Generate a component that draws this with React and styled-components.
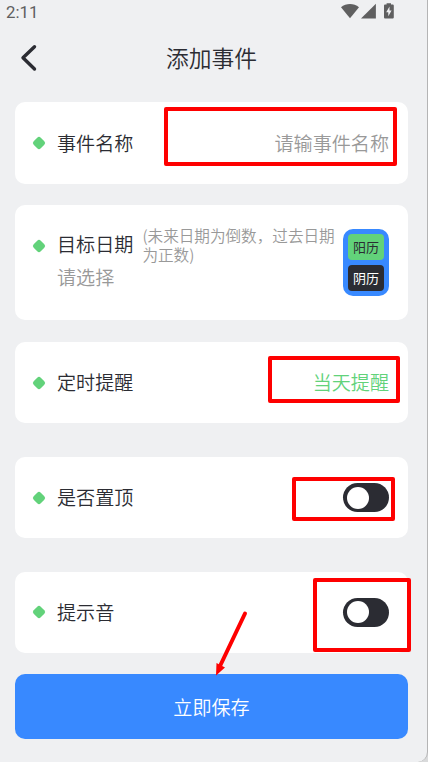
import React, { useState } from "react";
import styled, { createGlobalStyle } from "styled-components";

const GlobalStyle = createGlobalStyle`
	* {
		box-sizing: border-box;
	}
	body {
		margin: 0;
		background-color: #d9dadb;
		font-family: "Noto Sans CJK SC", sans-serif;
		font-weight: 350;
	}
`;

const Screen = styled.div`
	position: relative;
	width: 428px;
	height: 762px;
	overflow: hidden;
	background-color: #eff0f2;
	border-right: 1px solid #b4b4b5;
	border-bottom-right-radius: 10px;
	color: #2b2c33;
`;

const StatusBar = styled.div`
	display: flex;
	align-items: center;
	justify-content: space-between;
	height: 24px;
	padding: 0 32px 0 6px;
	color: #5f5f60;
	font-family: Roboto, sans-serif;
	font-size: 16.8px;
	font-weight: 400;
	line-height: 24px;
`;

const StatusIcons = styled.svg`
	display: block;
	width: 54px;
	height: 18px;
	margin-top: -2px;
`;

const Header = styled.header`
	display: grid;
	grid-template-columns: 42px 1fr 42px;
	align-items: center;
	height: 68px;
	padding-right: 4px;
`;

const BackButton = styled.button`
	display: flex;
	padding: 0 0 0 20px;
	border: none;
	background: none;
	color: #2b2c33;
`;

const Title = styled.h1`
	margin: 0;
	font-size: 22.8px;
	font-weight: 350;
	line-height: 30px;
	text-align: center;
`;

const Form = styled.main`
	display: flex;
	flex-direction: column;
	padding: 10px 19px 0 15px;
`;

const Card = styled.section`
	display: flex;
	align-items: ${(props) => (props.$top ? "flex-start" : "center")};
	height: ${(props) => props.$height || 81}px;
	margin-bottom: ${(props) => props.$gap}px;
	padding: ${(props) => (props.$top ? "24px" : "0")} 19px 0 19px;
	border-radius: 10px;
	background-color: #fff;
`;

const Dot = styled.span`
	flex: none;
	width: 10px;
	height: 10px;
	margin: ${(props) => props.$offset || 0}px 13px 0 0;
	border-radius: 2.5px;
	background-color: #62d27a;
	transform: rotate(45deg);
`;

const Label = styled.span`
	flex: none;
	font-size: 19.1px;
	line-height: 30px;
	padding-bottom: 1px;
`;

const Value = styled.span`
	margin-left: auto;
	padding-bottom: 1px;
	color: ${(props) => (props.$active ? "#62d27a" : "#999")};
	font-size: 19.1px;
	line-height: 30px;
`;

const DateField = styled.div`
	flex: 1;
`;

const DateHead = styled.div`
	display: flex;
	height: 33px;
`;

const Hint = styled.span`
	width: 200px;
	margin: -3px -10px 0 9px;
	color: #999;
	font-size: 15.6px;
	line-height: 18.5px;
`;

const Placeholder = styled.div`
	color: #999;
	font-size: 19.1px;
	line-height: 30px;
`;

const Calendars = styled.div`
	display: flex;
	flex: none;
	flex-direction: column;
	gap: 5px;
	width: 46px;
	height: 67px;
	padding: 5px;
	border-radius: 10px;
	background-color: #3889ff;
`;

const Calendar = styled.span`
	flex: 1;
	border-radius: 4px;
	background-color: ${(props) => (props.$selected ? "#62d27a" : "#2b2c33")};
	color: ${(props) => (props.$selected ? "#2b2c33" : "#fff")};
	font-size: 13px;
	font-weight: 400;
	line-height: 26px;
	text-align: center;
`;

const Track = styled.button`
	width: 46px;
	height: 29px;
	margin-left: auto;
	padding: 0 3.5px;
	border: none;
	border-radius: 15px;
	background-color: ${(props) => (props.$on ? "#62d27a" : "#2b2c33")};
`;

const Knob = styled.span`
	display: block;
	width: 22px;
	height: 22px;
	margin-left: ${(props) => (props.$on ? "auto" : "0")};
	border-radius: 50%;
	background-color: #fff;
`;

const SaveButton = styled.button`
	height: 65px;
	border: none;
	border-radius: 10px;
	background-color: #3889ff;
	color: #fff;
	font-family: inherit;
	font-size: 19.1px;
	font-weight: 350;
	line-height: 30px;
`;

//red marks drawn over the form
const Mark = styled.div`
	position: absolute;
	left: ${(props) => props.$x}px;
	top: ${(props) => props.$y}px;
	width: ${(props) => props.$w}px;
	height: ${(props) => props.$h}px;
	border: 4px solid #fe0000;
	border-radius: 2px;
	pointer-events: none;
`;

const Arrow = styled.svg`
	position: absolute;
	left: 210px;
	top: 608px;
	pointer-events: none;
`;

const Switch = () => {
	const [on, setOn] = useState(false);
	return (
		<Track $on={on} onClick={() => setOn(!on)}>
			<Knob $on={on} />
		</Track>
	);
};

const App = () => {
	return (
		<>
			<GlobalStyle />
			<Screen>
				<StatusBar>
					2:11
					<StatusIcons viewBox="0 0 54 18" fill="#5f5f60">
						<path d="M0 5.2C5.2 .8 12.8 .8 18 5.2L9 16.2Z" />
						<path d="M34.9 1.8V16.5H20Z" />
						<path d="M45.6 2.4V1.2H50V2.4H51.4C52.3 2.4 52.8 2.9 52.8 3.8V15.2C52.8 16.1 52.3 16.6 51.4 16.6H44.4C43.5 16.6 43 16.1 43 15.2V3.8C43 2.9 43.5 2.4 44.4 2.4Z" />
						<path d="M48.5 4.6L45.2 10.2H47.3V14.2L50.6 8.6H48.5Z" fill="#eff0f2" />
					</StatusIcons>
				</StatusBar>
				<Header>
					<BackButton>
						<svg width="18" height="28" viewBox="0 0 18 28" fill="none" stroke="currentColor" strokeWidth="3.4" strokeLinecap="round" strokeLinejoin="round">
							<path d="M14.5 2.7L3 13.8L14.5 25" />
						</svg>
					</BackButton>
					<Title>添加事件</Title>
				</Header>
				<Form>
					<Card $height={82} $gap={21}>
						<Dot />
						<Label>事件名称</Label>
						<Value>请输事件名称</Value>
					</Card>
					<Card $height={115} $gap={22} $top>
						<Dot $offset={12} />
						<DateField>
							<DateHead>
								<Label>目标日期</Label>
								<Hint>(未来日期为倒数，过去日期为正数)</Hint>
							</DateHead>
							<Placeholder>请选择</Placeholder>
						</DateField>
						<Calendars>
							<Calendar $selected>阳历</Calendar>
							<Calendar>阴历</Calendar>
						</Calendars>
					</Card>
					<Card $gap={34}>
						<Dot />
						<Label>定时提醒</Label>
						<Value $active>当天提醒</Value>
					</Card>
					<Card $gap={33.5}>
						<Dot />
						<Label>是否置顶</Label>
						<Switch />
					</Card>
					<Card $gap={21.5}>
						<Dot />
						<Label>提示音</Label>
						<Switch />
					</Card>
					<SaveButton>立即保存</SaveButton>
				</Form>
				<Mark $x={164} $y={107} $w={233} $h={59} />
				<Mark $x={268} $y={356} $w={132} $h={47} />
				<Mark $x={292} $y={477} $w={103} $h={44} />
				<Mark $x={313} $y={578} $w={98} $h={74} />
				<Arrow width="40" height="70" viewBox="0 0 40 70">
					<path d="M35 5.5L10.5 57" stroke="#fe0000" strokeWidth="4" strokeLinecap="round" />
					<path d="M6 67.5L6.5 55L15 59.5Z" fill="#fe0000" />
				</Arrow>
			</Screen>
		</>
	);
};

export default App;
